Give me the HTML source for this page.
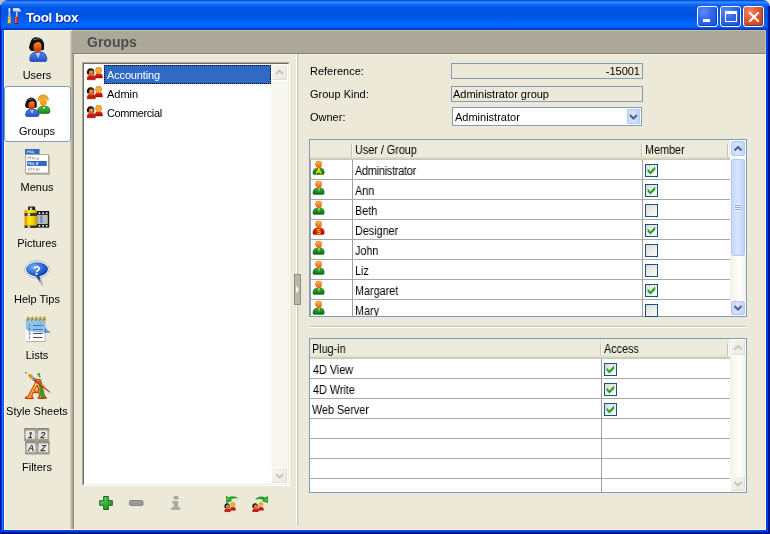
<!DOCTYPE html>
<html><head><meta charset="utf-8">
<style>
*{box-sizing:border-box}
html,body{margin:0;padding:0}
body{width:770px;height:534px;overflow:hidden;position:relative;background:linear-gradient(to right,#c0c0c0 50%,#ece9d8 50%);font-family:"Liberation Sans",sans-serif;font-size:11px;color:#000}
.a{position:absolute}
.t{position:absolute;white-space:nowrap;line-height:13px;font-size:11px;will-change:transform}
#win{left:0;top:0;width:770px;height:534px;border-radius:8px 7px 0 0;overflow:hidden;
 background:linear-gradient(to bottom,#0042d6 0px,#0a5ff0 1px,#3d8fff 2px,#2c80fb 3px,#0b64f2 5px,#0057e6 8px,#0053e0 14px,#005ef3 20px,#0066ff 24px,#0064fc 27px,#0050e0 28px,#0038c4 29px,#0038c4 30px)}
#frame{left:0;top:30px;width:770px;height:504px;
 background:linear-gradient(to right,#0010c0 0,#0010c0 1px,#0033dd 1px,#0033dd 2px,#2a78f2 2px,#2a78f2 3px,#0a58e8 3px,#0a58e8 4px,transparent 4px,transparent 766px,#0046ee 766px,#0040e0 768px,#001a9e 768px,#001a9e 769px,#000f80 769px)}
#bot{left:0;top:530px;width:768px;height:4px;background:linear-gradient(to bottom,#0046ee 0,#0040e0 2px,#001a9e 2px,#001a9e 3px,#000f80 3px)}
#content{left:4px;top:30px;width:762px;height:500px;background:#ece9d8;border:1px solid #fcf6dc;border-right-color:#fcf6dc;border-bottom-color:#fcf6dc}
.btn{width:21px;height:21px;border:1px solid #fff;border-radius:3px;background:radial-gradient(circle at 30% 25%,#5c8cf8 0,#2f66ec 45%,#1e50d8 100%);box-shadow:inset -1px -1px 1px rgba(0,20,120,.45)}
.close{background:radial-gradient(circle at 30% 25%,#f08a6a 0,#e0562c 45%,#c8401c 100%)}
.side{left:4px;width:66px;text-align:center}
.sbd{width:17px;height:17px;border:1px solid #fff;border-radius:2px;background:linear-gradient(135deg,#f6f5f0,#eae8df);box-shadow:inset -1px -1px 0 #e0ded2}
.hdr{background:linear-gradient(to bottom,#ebeadb 0,#ebeadb 17px,#e2decd 17px,#e2decd 18px,#d6d2c2 18px,#d6d2c2 19px,#cbc7b8 19px)}
.hdv{top:4px;width:2px;height:13px;border-left:1px solid #c7c5b2;border-right:1px solid #fff}
.cb{width:13px;height:13px;border:1px solid #1c5180;background:linear-gradient(135deg,#dcdcd7,#fbfbf9)}
.sbb{width:16px;border:1px solid #fff;border-radius:3px;background:linear-gradient(to right,#c8d6fb,#d8e4ff 50%,#bccef8);box-shadow:inset 0 0 0 1px #b4c8f4}
.tt{font-size:12px;transform:scaleX(0.9);transform-origin:0 0}
</style></head>
<body>

<svg width="0" height="0" style="position:absolute">
 <defs>
  <linearGradient id="gface" x1="0" y1="0" x2="0" y2="1"><stop offset="0" stop-color="#ffa850"/><stop offset="1" stop-color="#e86010"/></linearGradient>
  <linearGradient id="ggrn" x1="0" y1="0" x2="0" y2="1"><stop offset="0" stop-color="#3aaa30"/><stop offset="1" stop-color="#0a7010"/></linearGradient>
  <linearGradient id="gred" x1="0" y1="0" x2="0" y2="1"><stop offset="0" stop-color="#e83010"/><stop offset="1" stop-color="#b00800"/></linearGradient>
  <symbol id="uN" viewBox="0 0 18 18">
    <path d="M3.6 14.4 Q2.8 14.4 2.9 12 Q3.2 8.4 7 7.9 L10.6 7.9 Q14.3 8.4 14.3 12 Q14.4 14.4 13.4 14.4 Z" fill="url(#ggrn)" stroke="#0a5a0a" stroke-width="0.4"/>
    <path d="M7.8 8.1 L10.2 8.1 L9 12.6 Z" fill="#90d880"/>
    <path d="M5.1 5.5 Q4.6 0.9 8.6 0.8 Q12.3 0.9 12.1 4.6 L11 4.6 L6.4 6 Z" fill="#c8941e"/>
    <ellipse cx="8.9" cy="4.9" rx="2.9" ry="3.3" fill="url(#gface)"/>
    <path d="M6 2.6 Q8.6 1.4 11.2 2.8 Q9 2.4 6.8 3.6 Z" fill="#e8c060"/>
  </symbol>
  <symbol id="uA" viewBox="0 0 18 18">
    <use href="#uN"/>
    <path d="M6.2 13.6 L8.7 9.2 L11.2 13.6 M7.2 12 L10.2 12" stroke="#ffd000" stroke-width="1.4" fill="none"/>
  </symbol>
  <symbol id="uS" viewBox="0 0 18 18">
    <path d="M3.6 14.4 Q2.8 14.4 2.9 12 Q3.2 8.4 7 7.9 L10.6 7.9 Q14.3 8.4 14.3 12 Q14.4 14.4 13.4 14.4 Z" fill="url(#gred)" stroke="#7a0a00" stroke-width="0.4"/>
    <path d="M5.1 5.5 Q4.6 0.9 8.6 0.8 Q12.3 0.9 12.1 4.6 L11 4.6 L6.4 6 Z" fill="#c8941e"/>
    <ellipse cx="8.9" cy="4.9" rx="2.9" ry="3.3" fill="url(#gface)"/>
    <path d="M6 2.6 Q8.6 1.4 11.2 2.8 Q9 2.4 6.8 3.6 Z" fill="#e8c060"/>
    <text x="8.7" y="13.8" font-family="Liberation Sans" font-weight="bold" font-size="6.5" fill="#ffd000" text-anchor="middle">S</text>
  </symbol>
  <symbol id="grp" viewBox="0 0 18 16">
    <path d="M10.2 13 Q9.8 9 12 8.5 L15.5 8.5 Q17.6 9 17.5 13 Z" fill="url(#gred)" stroke="#8a0800" stroke-width="0.4"/>
    <ellipse cx="13.6" cy="5.3" rx="3.3" ry="3.4" fill="#c8901a"/>
    <ellipse cx="13.9" cy="5.9" rx="2.5" ry="2.7" fill="#ffa840"/>
    <path d="M11.2 4.4 Q12.6 2.6 15.6 3.2 Q13.4 3.4 11.6 5.2 Z" fill="#e8c060"/>
    <path d="M2.2 14.8 Q1.8 10.8 4.5 10.3 L8.3 10.3 Q10.6 10.8 10.4 14.8 Z" fill="url(#gred)" stroke="#8a0800" stroke-width="0.4"/>
    <path d="M2.4 9.6 Q1.2 6.4 2.8 4.6 Q4 3 6 3.2 Q8.8 3.4 9.3 6.2 L9.2 9.4 Z" fill="#111"/>
    <ellipse cx="6.3" cy="7.4" rx="2.3" ry="2.9" fill="url(#gface)"/>
    <path d="M3.9 6.6 Q4.4 4.6 6.6 4.5 Q8.4 4.6 8.7 6 Q7.2 5.2 6 5.6 Q4.8 6 3.9 6.6 Z" fill="#111"/>
  </symbol>
 </defs>
</svg>
<div id="win" class="a">
  <div id="frame" class="a"></div>
  <div class="a" style="left:0;top:5px;width:1px;height:25px;background:#0028c4"></div>
  <div class="a" style="left:767px;top:6px;width:3px;height:24px;background:linear-gradient(to right,#0046d8 0,#0046d8 1px,#0024a8 1px,#0024a8 2px,#00128a 2px)"></div>
  <div id="bot" class="a"></div>
  <div id="content" class="a"></div>


  <!-- sidebar strip/splitter -->
  <div class="a" style="left:69px;top:31px;width:1px;height:498px;background:#f0ede0"></div>
  <div class="a" style="left:70px;top:31px;width:3px;height:498px;background:linear-gradient(to right,#c9c6b6 0,#c9c6b6 1px,#bdbaa9 1px,#bdbaa9 2px,#b0ad9c 2px)"></div>
  <!-- header -->
  <div class="a" style="left:72px;top:30px;width:694px;height:24px;background:#aca899;border-top:1px solid #c6bd9f;border-bottom:1px solid #868272;border-right:1px solid #c6bd9f"></div>
  <div class="t" style="left:87px;top:34px;font-size:14px;line-height:16px;font-weight:bold;color:#4d4d4d">Groups</div>
  <!-- main panel edges -->
  <div class="a" style="left:73px;top:54px;width:1px;height:475px;background:#858373"></div>
  <div class="a" style="left:74px;top:54px;width:1px;height:475px;background:#f8f5e6"></div>
  <div class="a" style="left:74px;top:54px;width:691px;height:1px;background:#f4f1e3"></div>
  <!-- group button -->
  <div class="a" style="left:4px;top:86px;width:67px;height:56px;background:#fff;border:1px solid #7f9db9;border-radius:3px"></div>
  <div class="t side" style="top:69px">Users</div>
  <div class="t side" style="top:125px">Groups</div>
  <div class="t side" style="top:181px">Menus</div>
  <div class="t side" style="top:237px">Pictures</div>
  <div class="t side" style="top:293px">Help Tips</div>
  <div class="t side" style="top:349px">Lists</div>
  <div class="t side" style="top:405px">Style Sheets</div>
  <div class="t side" style="top:461px">Filters</div>

  <svg class="a" style="left:0;top:0" width="72" height="534" viewBox="0 0 72 534">
    <defs>
      <linearGradient id="face" x1="0" y1="0" x2="0" y2="1"><stop offset="0" stop-color="#f59030"/><stop offset="1" stop-color="#d42a00"/></linearGradient>
      <linearGradient id="mface" x1="0" y1="0" x2="0" y2="1"><stop offset="0" stop-color="#ffc040"/><stop offset="1" stop-color="#f09010"/></linearGradient>
      <linearGradient id="blue" x1="0" y1="0" x2="0" y2="1"><stop offset="0" stop-color="#5a86ea"/><stop offset="1" stop-color="#2250c8"/></linearGradient>
      <linearGradient id="green" x1="0" y1="0" x2="0" y2="1"><stop offset="0" stop-color="#50c040"/><stop offset="1" stop-color="#108a10"/></linearGradient>
      <radialGradient id="bub" cx="0.35" cy="0.35" r="0.7"><stop offset="0" stop-color="#7ab0ff"/><stop offset="0.6" stop-color="#2f68d8"/><stop offset="1" stop-color="#0c3aa8"/></radialGradient>
      <linearGradient id="can" x1="0" y1="0" x2="1" y2="0"><stop offset="0" stop-color="#f08000"/><stop offset="0.35" stop-color="#ffee00"/><stop offset="0.7" stop-color="#f0d000"/><stop offset="1" stop-color="#c89000"/></linearGradient>
    </defs>
    <!-- Users -->
    <g>
      <path d="M31.2 61.5 Q29.4 61.4 29.7 58.6 Q30.3 53.2 35 52 L41.5 52 Q46.3 53.2 46.9 58.6 Q47.1 61.4 45.3 61.5 Z" fill="url(#blue)" stroke="#1a3aa0" stroke-width="0.7"/>
      <path d="M34.6 52.3 L41 52.3 L38.3 59.6 Z" fill="#9cd8ff" stroke="#1a3aa0" stroke-width="0.6"/>
      <path d="M32.4 50.9 Q29.6 50.8 29 47.5 Q29.6 44 30.4 42.6 Q31.5 38.2 35 37.3 Q39.4 36.6 42.2 39.8 Q44.3 42.4 44.1 46 L44 49.2 Q43.4 50.4 42.3 50.3 Z" fill="#111"/>
      <ellipse cx="37.5" cy="46.8" rx="4.1" ry="5.7" fill="url(#face)"/>
      <path d="M33.2 45 Q33.4 40.6 37.5 40.2 Q40.6 40.2 41.7 42.8 Q39 41.4 36.8 42.2 Q34.6 43 33.2 45 Z" fill="#111"/>
      <path d="M33.4 39.6 Q37 37.4 41.2 39.6 Q37.6 38.6 33.8 40.6 Z" fill="#777"/>
    </g>
    <!-- Groups -->
    <g>
      <path d="M39.2 113.4 Q37.2 113.3 37.4 110.8 Q38 107 42 106.2 L46 106.2 Q49.8 107 50 110.8 Q50.2 113.3 48.3 113.4 Z" fill="url(#green)" stroke="#0a5a0a" stroke-width="0.6"/>
      <path d="M42.2 106.5 L45.6 106.5 L43.9 110.6 Z" fill="#e8ffe8" stroke="#0a6a0a" stroke-width="0.5"/>
      <ellipse cx="43.3" cy="101.4" rx="3.7" ry="4.8" fill="url(#mface)"/>
      <path d="M38.2 101.5 Q37.6 95 43 94.7 Q48.6 94.8 48.4 100.5 L47.3 99.5 Q46.2 97.2 43.6 97.6 Q41 97.6 39.6 99.4 Z" fill="#f0a428" stroke="#c07010" stroke-width="0.4"/>
      <g transform="matrix(0.78 0 0 0.78 2.38 68.54)">
        <path d="M31.2 61.5 Q29.4 61.4 29.7 58.6 Q30.3 53.2 35 52 L41.5 52 Q46.3 53.2 46.9 58.6 Q47.1 61.4 45.3 61.5 Z" fill="url(#blue)" stroke="#1a3aa0" stroke-width="0.8"/>
        <path d="M34.6 52.3 L41 52.3 L38.3 59.6 Z" fill="#9cd8ff" stroke="#1a3aa0" stroke-width="0.7"/>
        <path d="M32.4 50.9 Q29.6 50.8 29 47.5 Q29.6 44 30.4 42.6 Q31.5 38.2 35 37.3 Q39.4 36.6 42.2 39.8 Q44.3 42.4 44.1 46 L44 49.2 Q43.4 50.4 42.3 50.3 Z" fill="#111"/>
        <ellipse cx="37.5" cy="46.8" rx="4.1" ry="5.7" fill="url(#face)"/>
        <path d="M33.2 45 Q33.4 40.6 37.5 40.2 Q40.6 40.2 41.7 42.8 Q39 41.4 36.8 42.2 Q34.6 43 33.2 45 Z" fill="#111"/>
        <path d="M33.4 39.6 Q37 37.4 41.2 39.6 Q37.6 38.6 33.8 40.6 Z" fill="#777"/>
      </g>
    </g>
    <!-- Menus -->
    <g>
      <rect x="26" y="156" width="24" height="19" fill="#7a7666" opacity="0.45"/>
      <rect x="25" y="149" width="14.6" height="5.4" fill="#316ac5"/>
      <path d="M27.4 150.6 v2.4 M28.4 150.6 l0.8 1.2 l0.8 -1.2 v2.4 M31.6 151.3 v1.7 M32.8 150.6 v2.4 h1.4" stroke="#fff" stroke-width="0.7" fill="none"/>
      <rect x="25.4" y="154.4" width="23" height="18.6" fill="#fff" stroke="#9b9680" stroke-width="0.8"/>
      <path d="M28 156.6 v2.8 M28.9 156.6 l0.9 1.4 l0.9 -1.4 v2.8 M32 158 h2 M33 157.2 v2.2 M35 157.6 v1.8 M37 157.6 v1.8 h1.4 v-1.8" stroke="#8a8a8a" stroke-width="0.7" fill="none"/>
      <rect x="26.8" y="161" width="20" height="5" fill="#316ac5"/>
      <path d="M28 162.2 v2.6 M28.9 162.2 l0.9 1.3 l0.9 -1.3 v2.6 M32 163 v1.8 M33.2 162.2 v2.6 h1.4 M36.4 162.6 h1.6 v1 h-1.6 v1.2 h1.6" stroke="#fff" stroke-width="0.7" fill="none"/>
      <path d="M28.4 168 h1.6 v2.6 h-1.6 z M31.6 167.6 v3 M30.8 168.2 h1.8 M33.6 167.6 v3 M34.6 168.6 v2 M36.4 168.4 h1.6 v1 h-1.6 v1.2 h1.6 M39.2 168.4 v2.2" stroke="#a0a0a0" stroke-width="0.7" fill="none"/>
    </g>
    <!-- Pictures -->
    <g>
      <rect x="37" y="211" width="12.2" height="16.6" fill="#151515"/>
      <rect x="38.6" y="212.3" width="1.6" height="1.6" fill="#fff"/><rect x="42.2" y="212.3" width="1.6" height="1.6" fill="#fff"/><rect x="45.8" y="212.3" width="1.6" height="1.6" fill="#fff"/>
      <rect x="38.6" y="225" width="1.6" height="1.6" fill="#fff"/><rect x="42.2" y="225" width="1.6" height="1.6" fill="#fff"/><rect x="45.8" y="225" width="1.6" height="1.6" fill="#fff"/>
      <rect x="37.2" y="214.8" width="10.6" height="9.3" fill="#b8bcbc"/>
      <rect x="40.2" y="215.5" width="2.5" height="7.5" fill="#5a9ad0"/>
      <rect x="40.6" y="215.5" width="1.6" height="2.6" fill="#e07070"/>
      <rect x="28" y="206.6" width="7.2" height="3.8" rx="1" fill="#202020"/>
      <rect x="29.8" y="207.6" width="2.4" height="2.4" fill="#d0d0d0"/>
      <rect x="24.6" y="210" width="12.4" height="17.5" fill="url(#can)"/>
      <rect x="24.6" y="213" width="12.4" height="3" fill="#404040"/>
      <rect x="27.5" y="213.2" width="2.6" height="2.6" fill="#e0e0e0"/>
      <rect x="24.6" y="225.5" width="12.4" height="2.4" fill="#303030"/>
      <rect x="27.5" y="225.7" width="2.6" height="2" fill="#e0e0e0"/>
    </g>
    <!-- Help Tips -->
    <g>
      <path d="M34.6 275.5 L42.6 285.6 L40.2 276.6 Z" fill="#fff" stroke="#8a8a8a" stroke-width="0.7"/>
      <ellipse cx="37" cy="269.3" rx="12.3" ry="8.5" fill="#fff" stroke="#9a9a9a" stroke-width="0.7"/>
      <ellipse cx="37" cy="269.3" rx="10.9" ry="7.1" fill="url(#bub)"/>
      <path d="M35.4 275.6 L40.8 282.6 L39.4 275.6 Z" fill="#1a46b0"/>
      <text x="36.8" y="274.8" font-family="Liberation Sans" font-weight="bold" font-size="12.5" fill="#fff" text-anchor="middle">?</text>
    </g>
    <!-- Lists -->
    <g>
      <rect x="26.5" y="319" width="19" height="23" fill="#807c70" opacity="0.5"/>
      <rect x="25.7" y="318" width="19" height="23" fill="#fff"/>
      <path d="M25.7 318.5 L45 318.5 L45 327 Q47 331 51 332.5 L38 332.5 Q30 332 25.7 329 Z" fill="#8cc0ee"/>
      <path d="M45 327 Q47 331 51 332.5 L44 333 Z" fill="#5a9ad0"/>
      <rect x="27" y="316.8" width="2.4" height="4.2" rx="0.6" fill="#e8c040"/><path d="M27 318.6 L29.4 317.4 M27 320.4 L29.4 319.2" stroke="#5a4a10" stroke-width="0.7"/><rect x="31" y="316.8" width="2.4" height="4.2" rx="0.6" fill="#e8c040"/><path d="M31 318.6 L33.4 317.4 M31 320.4 L33.4 319.2" stroke="#5a4a10" stroke-width="0.7"/><rect x="35" y="316.8" width="2.4" height="4.2" rx="0.6" fill="#e8c040"/><path d="M35 318.6 L37.4 317.4 M35 320.4 L37.4 319.2" stroke="#5a4a10" stroke-width="0.7"/><rect x="39" y="316.8" width="2.4" height="4.2" rx="0.6" fill="#e8c040"/><path d="M39 318.6 L41.4 317.4 M39 320.4 L41.4 319.2" stroke="#5a4a10" stroke-width="0.7"/><rect x="43" y="316.8" width="2.4" height="4.2" rx="0.6" fill="#e8c040"/><path d="M43 318.6 L45.4 317.4 M43 320.4 L45.4 319.2" stroke="#5a4a10" stroke-width="0.7"/>
      <rect x="33" y="325" width="9.6" height="1" fill="#3a78b8"/>
      <rect x="33" y="329" width="9.6" height="1" fill="#3a78b8"/>
      <rect x="33" y="333" width="9.6" height="1" fill="#555"/>
      <rect x="33" y="337" width="9.6" height="1" fill="#555"/>
      <path d="M29.3 323.8 v3 M28.6 328 h1.4 v1.2 h-1.4 v1.6 h1.6 M28.6 332 h1.4 v3 h-1.4 M28.6 333.5 h1.2 M29.6 336 v3 M28.4 338 h1.8" stroke="#5a6a80" stroke-width="0.6" fill="none"/>
    </g>
    <!-- Style Sheets -->
    <g>
      <defs><linearGradient id="aorg" x1="0" y1="0" x2="0" y2="1"><stop offset="0" stop-color="#ffe040"/><stop offset="1" stop-color="#ff9a10"/></linearGradient></defs>
      <path fill-rule="evenodd" d="M25.5 398.5 L33 398.5 L33 397 L31.6 396.6 L33 392.6 L38.9 392.6 L39.6 396.6 L38.2 397 L38.2 398.5 L46.2 398.5 L46.2 397 L44.6 396.5 L40.6 379.6 L37 379.6 L28 396.5 L25.5 397 Z M33.8 391 L38.6 391 L37.4 385 Z" fill="url(#aorg)" stroke="#c01800" stroke-width="0.9" stroke-linejoin="round"/>
      <path d="M38.6 380.2 L40.4 380.2 L44.2 396.6 L45.6 397.2 L45.6 398 L41 398 L39.6 392.4 Z" fill="#2aa020"/>
      <path d="M34.97 377.85 L50 392.5 L33.03 380.15 Z" fill="#e03010" stroke="#a01000" stroke-width="0.5"/>
      <path d="M35 378.6 L46 388.6" stroke="#ff9070" stroke-width="0.6"/>
      <ellipse cx="33.6" cy="379" rx="1.6" ry="1.4" fill="#30a0e0"/>
      <ellipse cx="31" cy="376.6" rx="2.9" ry="1.9" fill="#d8a020" transform="rotate(40 31 376.6)"/>
      <path d="M28.6 373.6 Q30.2 374.4 29.8 376.4 Q28.6 375.6 28.6 373.6 Z" fill="#40a030"/>
      <circle cx="25.8" cy="372.8" r="0.9" fill="#40a030"/>
      <circle cx="38.8" cy="374.4" r="1.3" fill="#40a030"/>
      <circle cx="39.6" cy="376.4" r="1" fill="#40a030"/>
    </g>
    <!-- Filters -->
    <g>
      <defs><linearGradient id="kbev" x1="0" y1="0" x2="0" y2="1"><stop offset="0" stop-color="#8c897a"/><stop offset="0.5" stop-color="#b4b1a2"/><stop offset="1" stop-color="#9a978a"/></linearGradient></defs>
      <rect x="24" y="428" width="12.6" height="13.2" fill="url(#kbev)" rx="1.2"/>
      <rect x="36.4" y="428" width="12.8" height="13.2" fill="url(#kbev)" rx="1.2"/>
      <rect x="25" y="441" width="12.2" height="13.4" fill="url(#kbev)" rx="1.2"/>
      <rect x="37" y="441" width="12.8" height="13.4" fill="url(#kbev)" rx="1.2"/>
      <rect x="25.8" y="430.4" width="9" height="8.6" fill="#e6e6e2"/>
      <rect x="38.2" y="430.4" width="9.2" height="8.6" fill="#e6e6e2"/>
      <rect x="26.8" y="443.4" width="8.6" height="8.8" fill="#e6e6e2"/>
      <rect x="38.8" y="443.4" width="9.2" height="8.8" fill="#e6e6e2"/>
      <g font-family="Liberation Sans" font-style="italic" font-size="8.5" fill="#252525" text-anchor="middle" stroke="#252525" stroke-width="0.25">
        <text x="30.4" y="437.6">1</text><text x="42.8" y="437.6">2</text><text x="31" y="450.8">A</text><text x="43.4" y="450.8">Z</text>
      </g>
    </g>
  </svg>

  <!-- listbox -->
  <div class="a" style="left:82px;top:62px;width:208px;height:424px;background:#fff;border-style:solid;border-width:1px;border-color:#aca899 #fff #fff #aca899"></div>
  <div class="a" style="left:83px;top:63px;width:206px;height:422px;border-style:solid;border-width:1px;border-color:#716f64 #f1efe2 #f1efe2 #716f64"></div>
  <div class="a" style="left:104px;top:65px;width:167px;height:19px;background:#316ac5;outline:1px dotted #000;outline-offset:-1px"></div>
<svg class="a" style="left:85px;top:65px" width="18" height="16" viewBox="0 0 18 16"><use href="#grp"/></svg><svg class="a" style="left:85px;top:84px" width="18" height="16" viewBox="0 0 18 16"><use href="#grp"/></svg><svg class="a" style="left:85px;top:103px" width="18" height="16" viewBox="0 0 18 16"><use href="#grp"/></svg>
  <div class="t" style="left:106.5px;top:69px;color:#fff;letter-spacing:-0.15px">Accounting</div>
  <div class="t" style="left:107px;top:88px">Admin</div>
  <div class="t" style="left:106.5px;top:107px;letter-spacing:-0.4px">Commercial</div>
  <div class="a" style="left:271px;top:64px;width:17px;height:420px;background-color:#fff;background-image:repeating-conic-gradient(#f1efe2 0 25%,#fff 0 50%);background-size:2px 2px"></div>
  <div class="a sbd" style="left:271px;top:64px"><svg width="15" height="15" viewBox="0 0 15 15" class="a" style="left:0;top:0"><path d="M4 9 L7.5 5.5 L11 9" stroke="#c9c7ba" stroke-width="2" fill="none"/></svg></div>
  <div class="a sbd" style="left:271px;top:467px"><svg width="15" height="15" viewBox="0 0 15 15" class="a" style="left:0;top:0"><path d="M4 6 L7.5 9.5 L11 6" stroke="#c9c7ba" stroke-width="2" fill="none"/></svg></div>
  <!-- splitter -->
  <div class="a" style="left:296px;top:54px;width:1px;height:472px;background:#fff"></div>
  <div class="a" style="left:297px;top:54px;width:1px;height:472px;background:#cbc8b8"></div><div class="a" style="left:298px;top:54px;width:1px;height:472px;background:#e2dfcf"></div>
  <div class="a" style="left:294px;top:274px;width:7px;height:31px;background:#bab7a6;border:1px solid #8f8c7e"></div>
  <svg class="a" style="left:294px;top:274px" width="7" height="31" viewBox="0 0 7 31"><path d="M2 12 L5 15.5 L2 19 Z" fill="#fff"/></svg>

  <!-- users table -->
  <div class="a" style="left:309px;top:139px;width:438px;height:178px;background:#fff;border:1px solid #7f9db9;overflow:hidden">
    <div class="a hdr" style="left:0;top:0;width:436px;height:20px"></div>
    <div class="a hdv" style="left:41px"></div>
    <div class="a hdv" style="left:331px"></div>
    <div class="a hdv" style="left:417px"></div>
    <div class="a" style="left:0;top:20px;width:1px;height:160px;background:#a0a0a0"></div>
    <div class="a" style="left:42px;top:20px;width:1px;height:160px;background:#a0a0a0"></div>
    <div class="a" style="left:332px;top:20px;width:1px;height:160px;background:#a0a0a0"></div>
    <div class="a" style="left:0;top:39px;width:420px;height:1px;background:#a8a8a8"></div><div class="a" style="left:0;top:59px;width:420px;height:1px;background:#a8a8a8"></div><div class="a" style="left:0;top:79px;width:420px;height:1px;background:#a8a8a8"></div><div class="a" style="left:0;top:99px;width:420px;height:1px;background:#a8a8a8"></div><div class="a" style="left:0;top:119px;width:420px;height:1px;background:#a8a8a8"></div><div class="a" style="left:0;top:139px;width:420px;height:1px;background:#a8a8a8"></div><div class="a" style="left:0;top:159px;width:420px;height:1px;background:#a8a8a8"></div>
  </div>
  <div class="t tt" style="left:355px;top:144px">User / Group</div>
  <div class="t tt" style="left:645px;top:144px">Member</div>
  <svg class="a" style="left:310px;top:160px" width="18" height="18" viewBox="0 0 18 18"><use href="#uA"/></svg>
  <div class="t tt" style="left:355px;top:165px;letter-spacing:-0.22px">Administrator</div>
  <div class="a cb on" style="left:645px;top:164px"><svg class="a" style="left:0;top:0" width="11" height="11" viewBox="0 0 11 11"><path d="M1.6 3.6 L4.4 6.4 L9.2 1.6 L9.2 4.8 L4.4 9.4 L1.6 6.6 Z" fill="#21a121"/></svg></div>
  <svg class="a" style="left:310px;top:180px" width="18" height="18" viewBox="0 0 18 18"><use href="#uN"/></svg>
  <div class="t tt" style="left:355px;top:185px">Ann</div>
  <div class="a cb on" style="left:645px;top:184px"><svg class="a" style="left:0;top:0" width="11" height="11" viewBox="0 0 11 11"><path d="M1.6 3.6 L4.4 6.4 L9.2 1.6 L9.2 4.8 L4.4 9.4 L1.6 6.6 Z" fill="#21a121"/></svg></div>
  <svg class="a" style="left:310px;top:200px" width="18" height="18" viewBox="0 0 18 18"><use href="#uN"/></svg>
  <div class="t tt" style="left:355px;top:205px">Beth</div>
  <div class="a cb" style="left:645px;top:204px"></div>
  <svg class="a" style="left:310px;top:220px" width="18" height="18" viewBox="0 0 18 18"><use href="#uS"/></svg>
  <div class="t tt" style="left:355px;top:225px">Designer</div>
  <div class="a cb on" style="left:645px;top:224px"><svg class="a" style="left:0;top:0" width="11" height="11" viewBox="0 0 11 11"><path d="M1.6 3.6 L4.4 6.4 L9.2 1.6 L9.2 4.8 L4.4 9.4 L1.6 6.6 Z" fill="#21a121"/></svg></div>
  <svg class="a" style="left:310px;top:240px" width="18" height="18" viewBox="0 0 18 18"><use href="#uN"/></svg>
  <div class="t tt" style="left:355px;top:245px">John</div>
  <div class="a cb" style="left:645px;top:244px"></div>
  <svg class="a" style="left:310px;top:260px" width="18" height="18" viewBox="0 0 18 18"><use href="#uN"/></svg>
  <div class="t tt" style="left:355px;top:265px">Liz</div>
  <div class="a cb" style="left:645px;top:264px"></div>
  <svg class="a" style="left:310px;top:280px" width="18" height="18" viewBox="0 0 18 18"><use href="#uN"/></svg>
  <div class="t tt" style="left:355px;top:285px">Margaret</div>
  <div class="a cb on" style="left:645px;top:284px"><svg class="a" style="left:0;top:0" width="11" height="11" viewBox="0 0 11 11"><path d="M1.6 3.6 L4.4 6.4 L9.2 1.6 L9.2 4.8 L4.4 9.4 L1.6 6.6 Z" fill="#21a121"/></svg></div>
  <svg class="a" style="left:310px;top:300px" width="18" height="18" viewBox="0 0 18 18"><use href="#uN"/></svg>
  <div class="t tt" style="left:355px;top:305px;clip-path:inset(0 0 2px 0)">Mary</div>
  <div class="a cb" style="left:645px;top:304px"></div>
  <!-- users scrollbar -->
  <div class="a" style="left:730px;top:140px;width:16px;height:176px;background:linear-gradient(to right,#f3f1ec,#fefefb 60%,#f3f1ec)"></div>
  <div class="a sbb" style="left:730px;top:140px;height:17px"><svg class="a" style="left:0;top:0" width="14" height="15" viewBox="0 0 14 15"><path d="M3.5 9.5 L7 6 L10.5 9.5" stroke="#4d6185" stroke-width="2" fill="none"/></svg></div>
  <div class="a sbb" style="left:730px;top:158px;height:99px"><div class="a" style="left:4px;top:45px;width:6px;height:7px;background:repeating-linear-gradient(to bottom,#eef4fe 0,#eef4fe 1px,#8ca8e8 1px,#8ca8e8 2px)"></div></div>
  <div class="a sbb" style="left:730px;top:300px;height:16px"><svg class="a" style="left:0;top:0" width="14" height="14" viewBox="0 0 14 14"><path d="M3.5 5 L7 8.5 L10.5 5" stroke="#4d6185" stroke-width="2" fill="none"/></svg></div>

  <!-- fields -->
  <div class="t" style="left:310px;top:65px">Reference:</div>
  <div class="t" style="left:310px;top:88px">Group Kind:</div>
  <div class="t" style="left:310px;top:111px">Owner:</div>
  <div class="a" style="left:451px;top:63px;width:192px;height:16px;border:1px solid #7f9db9;background:#ece9d8"></div>
  <div class="t" style="left:544px;top:65px;width:96px;text-align:right">-15001</div>
  <div class="a" style="left:451px;top:86px;width:192px;height:16px;border:1px solid #7f9db9;background:#ece9d8"></div>
  <div class="t" style="left:453px;top:88px">Administrator group</div>
  <div class="a" style="left:452px;top:107px;width:190px;height:19px;border:1px solid #7f9db9;background:#fff"></div>
  <div class="t" style="left:455px;top:111px">Administrator</div>
  <div class="a sbb" style="left:626px;top:108px;width:15px;height:17px;border-radius:2px"><svg class="a" style="left:0;top:0" width="13" height="15" viewBox="0 0 13 15"><path d="M3 6 L6.5 9.5 L10 6" stroke="#4d6185" stroke-width="2" fill="none"/></svg></div>
  <!-- separator -->
  <div class="a" style="left:310px;top:326px;width:436px;height:1px;background:#c5c2b2"></div>
  <div class="a" style="left:310px;top:327px;width:436px;height:1px;background:#fff"></div>
  <!-- plugin table -->
  <div class="a" style="left:309px;top:338px;width:438px;height:155px;background:#fff;border:1px solid #7f9db9;overflow:hidden">
    <div class="a hdr" style="left:0;top:0;width:436px;height:20px"></div>
    <div class="a hdv" style="left:290px"></div>
    <div class="a hdv" style="left:417px"></div>
    <div class="a" style="left:291px;top:20px;width:1px;height:140px;background:#a0a0a0"></div>
    <div class="a" style="left:0;top:39px;width:420px;height:1px;background:#a8a8a8"></div><div class="a" style="left:0;top:59px;width:420px;height:1px;background:#a8a8a8"></div><div class="a" style="left:0;top:79px;width:420px;height:1px;background:#a8a8a8"></div><div class="a" style="left:0;top:99px;width:420px;height:1px;background:#a8a8a8"></div><div class="a" style="left:0;top:119px;width:420px;height:1px;background:#a8a8a8"></div><div class="a" style="left:0;top:139px;width:420px;height:1px;background:#a8a8a8"></div>
  </div>
  <div class="t tt" style="left:312px;top:343px">Plug-in</div>
  <div class="t tt" style="left:604px;top:343px">Access</div>
  <div class="t tt" style="left:313px;top:364px">4D View</div><div class="a cb on" style="left:604px;top:363px"><svg class="a" style="left:0;top:0" width="11" height="11" viewBox="0 0 11 11"><path d="M1.6 3.6 L4.4 6.4 L9.2 1.6 L9.2 4.8 L4.4 9.4 L1.6 6.6 Z" fill="#21a121"/></svg></div><div class="t tt" style="left:313px;top:384px">4D Write</div><div class="a cb on" style="left:604px;top:383px"><svg class="a" style="left:0;top:0" width="11" height="11" viewBox="0 0 11 11"><path d="M1.6 3.6 L4.4 6.4 L9.2 1.6 L9.2 4.8 L4.4 9.4 L1.6 6.6 Z" fill="#21a121"/></svg></div><div class="t tt" style="left:312px;top:404px">Web Server</div><div class="a cb on" style="left:604px;top:403px"><svg class="a" style="left:0;top:0" width="11" height="11" viewBox="0 0 11 11"><path d="M1.6 3.6 L4.4 6.4 L9.2 1.6 L9.2 4.8 L4.4 9.4 L1.6 6.6 Z" fill="#21a121"/></svg></div>
  <div class="a" style="left:730px;top:339px;width:16px;height:153px;background:linear-gradient(to right,#f3f1ec,#fefefb 60%,#f3f1ec)"></div>
  <div class="a sbd" style="left:730px;top:339px;width:16px;height:17px"><svg class="a" style="left:0;top:0" width="14" height="15" viewBox="0 0 14 15"><path d="M3.5 9.5 L7 6 L10.5 9.5" stroke="#c9c7ba" stroke-width="2" fill="none"/></svg></div>
  <div class="a sbd" style="left:730px;top:476px;width:16px;height:16px"><svg class="a" style="left:0;top:0" width="14" height="14" viewBox="0 0 14 14"><path d="M3.5 5 L7 8.5 L10.5 5" stroke="#c9c7ba" stroke-width="2" fill="none"/></svg></div>
  <!-- toolbar -->
  <svg class="a" style="left:96px;top:493px" width="180" height="20" viewBox="96 493 180 20">
    <defs><linearGradient id="gplus" x1="0" y1="0" x2="1" y2="1"><stop offset="0" stop-color="#7ee07e"/><stop offset="0.5" stop-color="#34b434"/><stop offset="1" stop-color="#189018"/></linearGradient></defs>
    <path d="M103.7 496.5 h4.6 v4.2 h4 v4.6 h-4 v4.2 h-4.6 v-4.2 h-4 v-4.6 h4 z" fill="url(#gplus)" stroke="#1e5a1e" stroke-width="1" stroke-linejoin="round"/>
    <rect x="129.5" y="500.5" width="13.5" height="5" rx="1.2" fill="#9b9b96" stroke="#7a7a76" stroke-width="0.8"/>
    <g fill="#aaa9a2">
      <rect x="173.6" y="496" width="4.8" height="3.6" rx="1.2"/>
      <path d="M172.3 501 h5.8 v6.2 h2 v2.8 h-8.8 v-2.8 h2.4 v-3.6 h-1.4 z"/>
    </g>
    <!-- import -->
    <g transform="translate(220 492)">
      <path d="M6 3.8 L6.2 11 L12.2 9 Q10.5 8 11 7.2 Q14 5.8 18 6.6 Q16.5 4.2 12 4.2 Q10 4.4 9.2 5.6 Z" fill="#22a022"/>
      <path d="M7 5 L7 8.5 L9.5 7 Z" fill="#6ad06a" opacity="0.7"/>
      <g transform="translate(3 9) scale(0.72)"><use href="#grp" width="18" height="16"/></g>
    </g>
    <!-- export -->
    <g transform="translate(248 492)">
      <path d="M20 4 L20 11 L14 9.2 Q15.2 8.6 15 7.8 Q11.5 6.2 7 7.6 Q9 4.6 13.5 4.4 Q15.5 4.5 16.6 5.4 Z" fill="#22a022"/>
      <path d="M19 5.5 L19 9.5 L16 8.2 Z" fill="#6ad06a" opacity="0.7"/>
      <g transform="translate(3 9) scale(0.72)"><use href="#grp" width="18" height="16"/></g>
    </g>
  </svg>
  <!-- title -->
  <svg class="a" style="left:7px;top:7px" width="16" height="18" viewBox="0 0 16 18">
    <defs><linearGradient id="tgrip" x1="0" y1="0" x2="1" y2="0"><stop offset="0" stop-color="#ff6a30"/><stop offset="1" stop-color="#c81010"/></linearGradient>
    <linearGradient id="thdl" x1="0" y1="0" x2="1" y2="0"><stop offset="0" stop-color="#ffe040"/><stop offset="1" stop-color="#f0a800"/></linearGradient></defs>
    <rect x="1.5" y="1.3" width="1.8" height="8.5" fill="#c8c8dc"/>
    <rect x="1.8" y="1.3" width="1.2" height="2.2" fill="#fff"/>
    <path d="M0.8 9.8 h3.2 v1.4 h-0.6 v1.2 h0.6 v4.4 h-3.2 v-4.4 h0.6 v-1.2 h-0.6 z" fill="url(#thdl)"/>
    <rect x="0.8" y="15.9" width="3.2" height="1" fill="#d04000"/>
    <path d="M6 1.3 L12.2 1.3 Q13.9 2.2 13.9 5.6 Q13 4.4 11.6 4.6 L6.3 4.6 Q5.8 3 6 1.3 Z" fill="#d4d4e0"/>
    <rect x="6.2" y="1.5" width="5.6" height="1" fill="#f4f4ff"/>
    <rect x="8.9" y="4.6" width="1.6" height="5.2" fill="#c8c8dc"/>
    <rect x="8" y="9.8" width="3" height="7" fill="url(#tgrip)"/>
    <rect x="8" y="16" width="3" height="0.9" fill="#800808"/>
  </svg>
  <div class="t" style="left:27px;top:10.5px;font-size:13.6px;line-height:16px;font-weight:bold;letter-spacing:-0.45px;color:#0a1e8c">Tool box</div>
  <div class="t" style="left:26px;top:9.5px;font-size:13.6px;line-height:16px;font-weight:bold;letter-spacing:-0.45px;color:#fff">Tool box</div>
  <div class="a btn" style="left:697px;top:6px"><div class="a" style="left:5px;top:12px;width:7px;height:3px;background:#fff"></div></div>
  <div class="a btn" style="left:720px;top:6px"><div class="a" style="left:4px;top:4px;width:12px;height:11px;border:1px solid #fff;border-top-width:3px"></div></div>
  <div class="a btn close" style="left:743px;top:6px">
    <svg class="a" style="left:0;top:0" width="21" height="21" viewBox="0 0 21 21"><path d="M6 6 L14 14 M14 6 L6 14" stroke="#fff" stroke-width="2" stroke-linecap="square"/></svg>
  </div>
</div>
</body></html>
